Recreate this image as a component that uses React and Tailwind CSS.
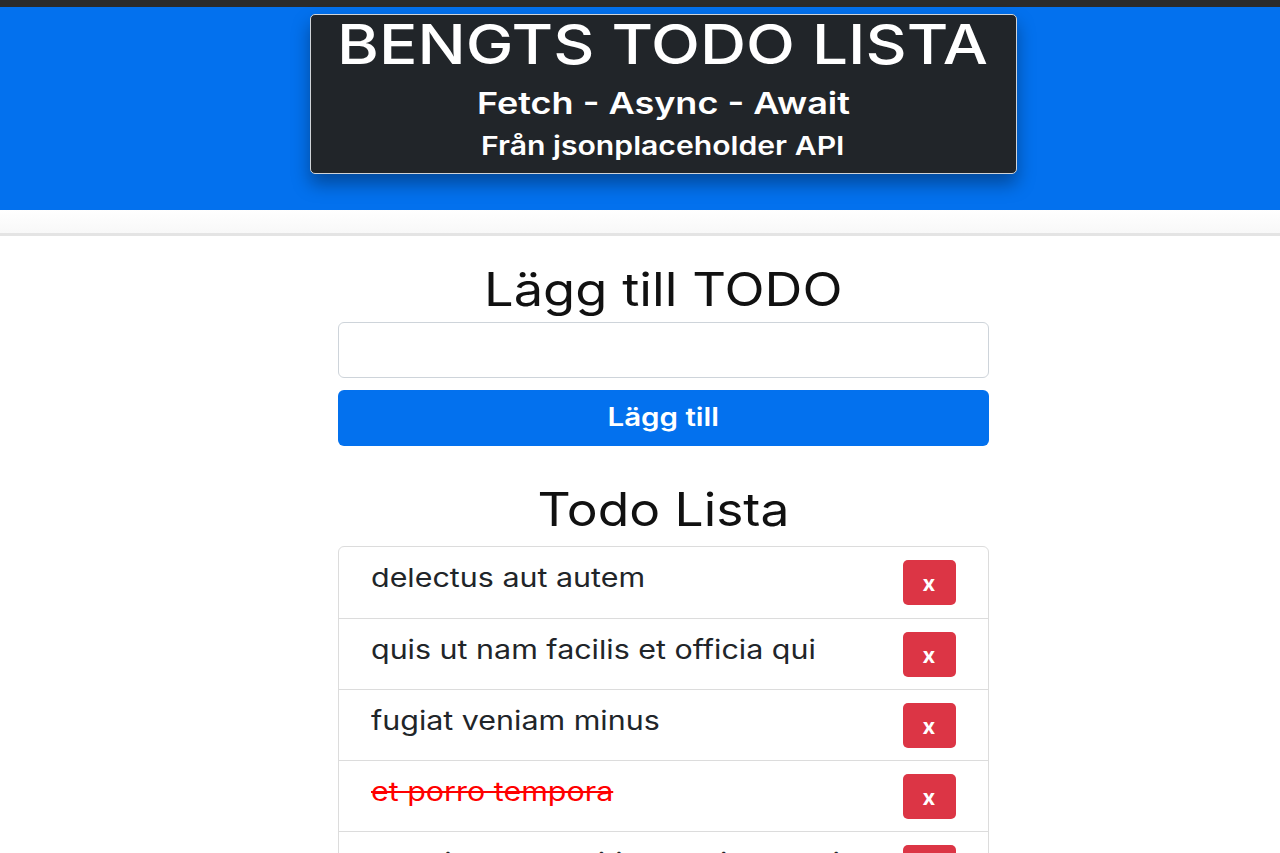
import React from "react";

const todos = [
  { title: "delectus aut autem", done: false },
  { title: "quis ut nam facilis et officia qui", done: false },
  { title: "fugiat veniam minus", done: false },
  { title: "et porro tempora", done: true },
  { title: "laboriosam mollitia et enim quasi adipisci quia provident illum", done: false },
  { title: "qui ullam ratione quibusdam voluptatem quia omnis", done: false },
];

export default function App() {
  return (
    <div className="min-h-[853px] bg-white" style={{ fontFamily: "Inter, 'Noto Sans', sans-serif" }}>
      <div className="h-[7px] bg-[#2b2b2b]" />
      <div className="h-[203px] bg-[#0371ee] pt-[7px] flex justify-center pl-[46px]">
        <div className="w-[707px] h-[160px] bg-[#212529] border border-[#d0d4d8] rounded-[5px] shadow-[0_10px_18px_rgba(0,0,0,0.35)] flex flex-col items-center text-white">
          <div className="text-[55px] font-medium leading-none mt-[2px] scale-x-[1.16] whitespace-nowrap">BENGTS TODO LISTA</div>
          <div className="text-[30px] font-semibold leading-none mt-[16px] scale-x-[1.2] whitespace-nowrap">Fetch - Async - Await</div>
          <div className="text-[26px] font-semibold leading-none mt-[15px] scale-x-[1.16] whitespace-nowrap">Från jsonplaceholder API</div>
        </div>
      </div>
      <div className="h-[23px] bg-gradient-to-b from-white to-[#f8f8f8]" />
      <div className="h-[3px] bg-[#e4e4e4]" />
      <div className="flex justify-center pl-[46px]">
        <div className="w-[651px] flex flex-col items-center">
          <h2 className="text-[46px] leading-none text-[#111] mt-[30px] scale-x-[1.14] whitespace-nowrap">Lägg till TODO</h2>
          <input className="w-full h-[56px] mt-[10px] border border-[#ced4da] rounded-[6px] bg-white" />
          <button className="w-full h-[56px] mt-[12px] bg-[#0371ee] rounded-[6px] text-white text-[25px] font-semibold">
            <span className="inline-block scale-x-[1.18]">Lägg till</span>
          </button>
          <h2 className="text-[46px] leading-none text-[#111] mt-[40px] scale-x-[1.12] whitespace-nowrap">Todo Lista</h2>
          <ul className="w-full mt-[14px] border border-[#dcdcdc] rounded-[6px]">
            {todos.map((t, i) => (
              <li
                key={i}
                className={`min-h-[71px] flex items-start justify-between pl-[32px] pr-[32px] pb-[12px] ${i > 0 ? "border-t border-[#dcdcdc]" : ""}`}
              >
                <span
                  className={`max-w-[420px] text-[26px] leading-[1.25] mt-[15px] origin-left scale-x-[1.17] ${t.done ? "line-through text-[#ff0000]" : "text-[#212529]"}`}
                >
                  {t.title}
                </span>
                <button className="mt-[13px] w-[53px] h-[45px] shrink-0 bg-[#dc3545] rounded-[5px] text-white text-[22px] font-bold leading-none flex items-center justify-center">
                  x
                </button>
              </li>
            ))}
          </ul>
        </div>
      </div>
    </div>
  );
}
